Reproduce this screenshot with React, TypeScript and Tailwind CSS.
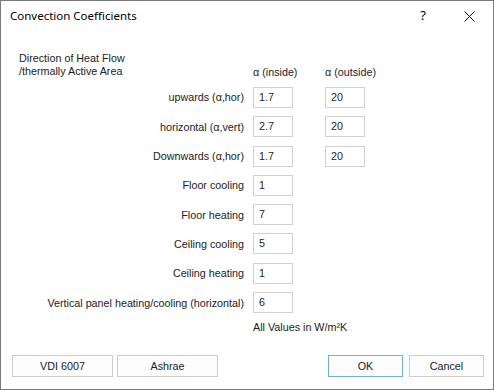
import React from "react";

const rows: { label: string; inside: string; outside?: string }[] = [
  { label: "upwards (α,hor)", inside: "1.7", outside: "20" },
  { label: "horizontal (α,vert)", inside: "2.7", outside: "20" },
  { label: "Downwards (α,hor)", inside: "1.7", outside: "20" },
  { label: "Floor cooling", inside: "1" },
  { label: "Floor heating", inside: "7" },
  { label: "Ceiling cooling", inside: "5" },
  { label: "Ceiling heating", inside: "1" },
  { label: "Vertical panel heating/cooling (horizontal)", inside: "6" },
];

function Box({ value }: { value: string }) {
  return (
    <div className="w-[40px] h-[21px] border border-[#d2d2d2] bg-white pl-[5px] leading-[18px] text-[#1f1f1f]">
      {value}
    </div>
  );
}

function Btn({ children, w, primary }: { children: React.ReactNode; w: string; primary?: boolean }) {
  return (
    <div
      className={
        "h-[22px] flex items-center justify-center bg-[#fdfdfd] border " +
        w +
        (primary ? " border-[#6cb1e4]" : " border-[#cccccc]")
      }
    >
      {children}
    </div>
  );
}

export default function App() {
  return (
    <div
      className="w-[494px] h-[390px] border border-[#7a7a7a] bg-white flex flex-col text-[#222] text-[10.75px]"
      style={{ fontFamily: '"Liberation Sans", Arial, sans-serif' }}
    >
      <div className="h-[30px] flex items-center shrink-0">
        <div
          className="pl-[9px] text-[11.5px] text-black flex-1"
          style={{ fontFamily: '"Noto Sans", "Open Sans", sans-serif' }}
        >
          Convection Coefficients
        </div>
        <div className="w-[46px] flex justify-center text-[13px] text-black" style={{ fontFamily: '"Noto Sans", sans-serif' }}>
          ?
        </div>
        <div className="w-[46px] flex justify-center mr-[1px]">
          <svg width="11" height="11" viewBox="0 0 11 11">
            <path d="M0.5 0.5 L10.5 10.5 M10.5 0.5 L0.5 10.5" stroke="#111" strokeWidth="1" />
          </svg>
        </div>
      </div>

      <div className="pl-[18px] pt-[21px] flex flex-col">
        <div className="flex items-end">
          <div className="w-[225px] leading-[13px]">
            Direction of Heat Flow
            <br />
            /thermally Active Area
          </div>
          <div className="ml-[9px] w-[72px] leading-[13px] mb-[-1px]">α (inside)</div>
          <div className="leading-[13px] mb-[-1px]">α (outside)</div>
        </div>

        <div className="mt-[9px] flex flex-col gap-[8.3px]">
          {rows.map((r) => (
            <div key={r.label} className="flex items-center h-[21px]">
              <div className="w-[225px] text-right whitespace-nowrap">{r.label}</div>
              <div className="ml-[9px]">
                <Box value={r.inside} />
              </div>
              {r.outside && (
                <div className="ml-[32px]">
                  <Box value={r.outside} />
                </div>
              )}
            </div>
          ))}
        </div>

        <div className="mt-[8px] ml-[234px] leading-[13px]">All Values in W/m²K</div>
      </div>

      <div className="mt-auto mb-[12px] flex px-[11px] text-[#222]">
        <Btn w="w-[101px]">VDI 6007</Btn>
        <div className="ml-[4px]">
          <Btn w="w-[101px]">Ashrae</Btn>
        </div>
        <div className="ml-auto flex gap-[6px] mr-[-2px]">
          <Btn w="w-[75px]" primary>
            OK
          </Btn>
          <Btn w="w-[75px]">Cancel</Btn>
        </div>
      </div>
    </div>
  );
}
